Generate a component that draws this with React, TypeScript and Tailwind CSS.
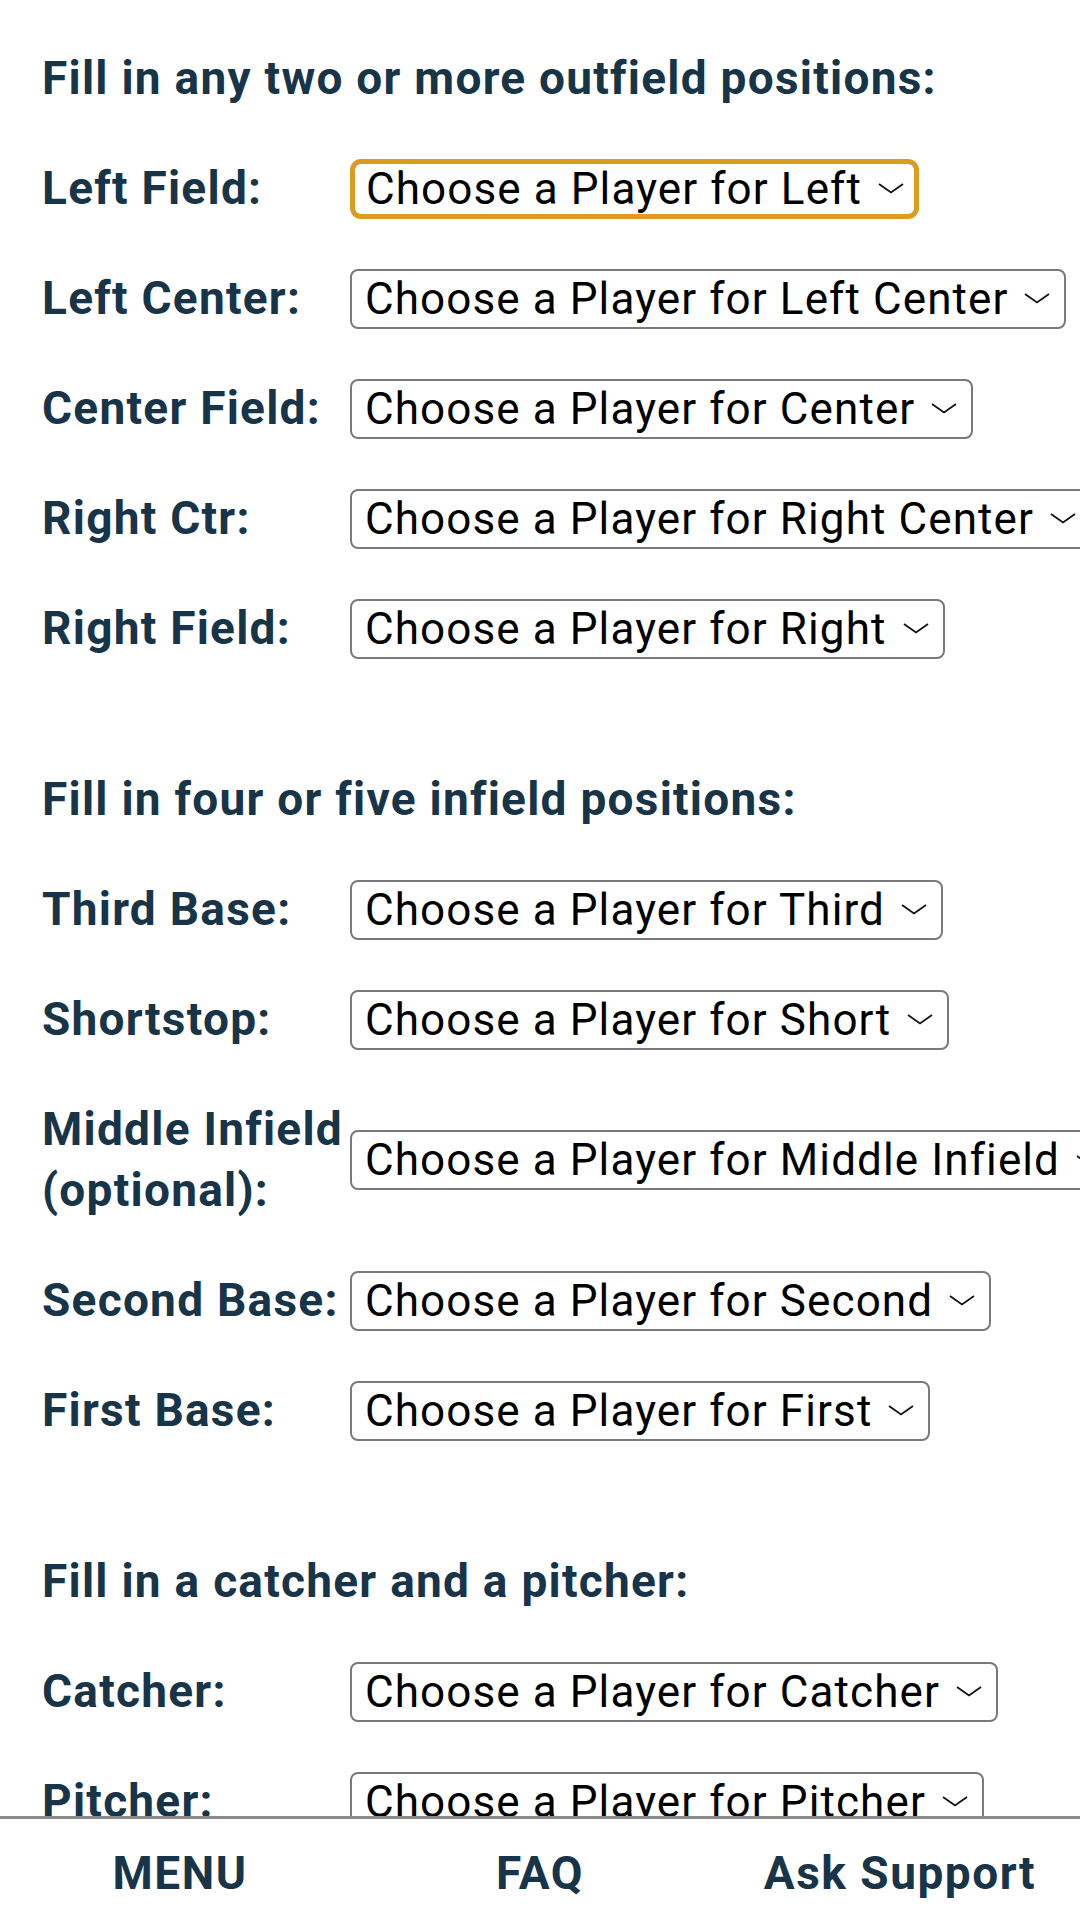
import React from 'react';

type Row = { label: string; placeholder: string; focused?: boolean };
type Section = { title: string; rows: Row[] };

const sections: Section[] = [
  {
    title: 'Fill in any two or more outfield positions:',
    rows: [
      { label: 'Left Field:', placeholder: 'Choose a Player for Left', focused: true },
      { label: 'Left Center:', placeholder: 'Choose a Player for Left Center' },
      { label: 'Center Field:', placeholder: 'Choose a Player for Center' },
      { label: 'Right Ctr:', placeholder: 'Choose a Player for Right Center' },
      { label: 'Right Field:', placeholder: 'Choose a Player for Right' },
    ],
  },
  {
    title: 'Fill in four or five infield positions:',
    rows: [
      { label: 'Third Base:', placeholder: 'Choose a Player for Third' },
      { label: 'Shortstop:', placeholder: 'Choose a Player for Short' },
      { label: 'Middle Infield (optional):', placeholder: 'Choose a Player for Middle Infield' },
      { label: 'Second Base:', placeholder: 'Choose a Player for Second' },
      { label: 'First Base:', placeholder: 'Choose a Player for First' },
    ],
  },
  {
    title: 'Fill in a catcher and a pitcher:',
    rows: [
      { label: 'Catcher:', placeholder: 'Choose a Player for Catcher' },
      { label: 'Pitcher:', placeholder: 'Choose a Player for Pitcher' },
    ],
  },
];

function Chevron() {
  return (
    <svg width="26" height="11" viewBox="0 0 26 11" fill="none" className="shrink-0 ml-[16px]">
      <polyline points="1,1 13,9.5 25,1" stroke="#111" strokeWidth="1.8" />
    </svg>
  );
}

function FakeSelect({ placeholder, focused }: { placeholder: string; focused?: boolean }) {
  return (
    <div
      className={`inline-flex items-center h-[60px] shrink-0 whitespace-nowrap bg-white text-black text-[44px] tracking-[1.1px] ${
        focused
          ? 'border-[5px] border-[#dc9c1f] rounded-[11px] pl-[11px] pr-[10px]'
          : 'border-[2.6px] border-[#7a7a7a] rounded-[8px] pl-[13px] pr-[14px]'
      }`}
    >
      <span className="leading-none">{placeholder}</span>
      <Chevron />
    </div>
  );
}

export default function App() {
  return (
    <div
      className="w-[1080px] h-[1920px] flex flex-col bg-white overflow-hidden"
      style={{ fontFamily: 'Roboto, "Noto Sans", sans-serif' }}
    >
      <div className="flex-1 min-h-0 overflow-hidden px-[42px] pt-[48px]">
        <div className="flex flex-col gap-[49px]">
          {sections.map((s, i) => (
            <React.Fragment key={s.title}>
              <h2
                className={`text-[46px] leading-[61px] tracking-[1.25px] font-bold text-[#173448] ${i > 0 ? 'mt-[61px]' : ''}`}
              >
                {s.title}
              </h2>
              {s.rows.map((r) => (
                <div key={r.label} className="flex items-center">
                  <div className="w-[308px] shrink-0 text-[46px] leading-[61px] tracking-[1.25px] font-bold text-[#173448]">
                    {r.label}
                  </div>
                  <FakeSelect placeholder={r.placeholder} focused={r.focused} />
                </div>
              ))}
            </React.Fragment>
          ))}
        </div>
      </div>

      {/* bottom nav */}
      <nav className="h-[104px] shrink-0 border-t-[3px] border-[#8a8a8a] grid grid-cols-3 items-center pt-[8px] bg-white">
        <a className="text-center text-[46px] tracking-[1.5px] font-bold text-[#173448]">MENU</a>
        <a className="text-center text-[46px] tracking-[1.5px] font-bold text-[#173448]">FAQ</a>
        <a className="text-center text-[46px] tracking-[1.5px] font-bold text-[#173448]">Ask Support</a>
      </nav>
    </div>
  );
}
